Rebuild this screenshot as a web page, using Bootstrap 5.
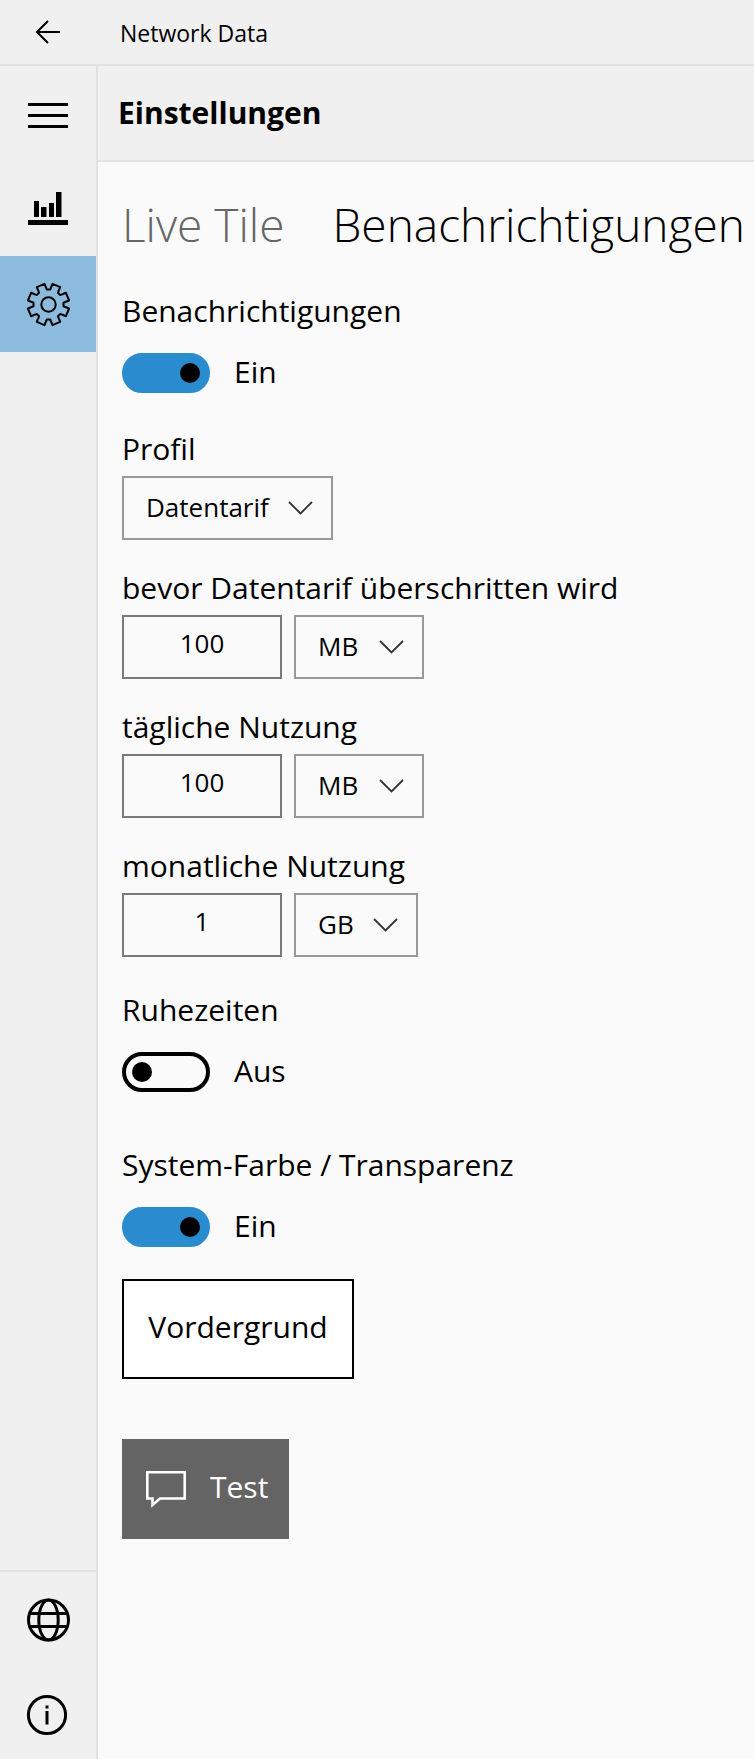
<!DOCTYPE html>
<html lang="de">
<head>
<meta charset="utf-8">
<meta name="viewport" content="width=device-width, initial-scale=1">
<title>Network Data</title>
<link href="https://cdn.jsdelivr.net/npm/bootstrap@5.3.0/dist/css/bootstrap.min.css" rel="stylesheet">
<style>
  :root { --line: #e2e2e2; --chrome: #f0f0f0; --accent: #2a8ccf; }
  body { background: #fafafa; color: #000; font-family: "Open Sans", "Noto Sans", sans-serif; font-size: 30px; line-height: 40px; }
  svg { display: block; flex-shrink: 0; fill: none; stroke: #000; stroke-width: 2; }
  .app-bar { height: 66px; background: var(--chrome); border-bottom: 2px solid var(--line); }
  .app-title { font-size: 23px; line-height: 32px; padding-left: 24px; padding-top: 2px; }
  .rail { width: 98px; background: var(--chrome); border-right: 2px solid var(--line); }
  .rail-btn { width: 96px; height: 96px; border: 0; border-radius: 0; padding: 0; display: flex; align-items: center; justify-content: center; }
  .rail-btn.menu { height: 94px; }
  .rail-btn.back { height: 64px; }
  .rail-btn.current { background: #8cbbdd; }
  .rail-foot { border-top: 2px solid var(--line); padding-top: 4px; gap: 7px; }
  .rail-foot .rail-btn { height: 88px; }
  .thick { stroke-width: 3; }
  .round { stroke-width: 3; }
  .page-head { height: 96px; background: var(--chrome); border-bottom: 2px solid var(--line); padding-left: 20px; }
  .page-head h1 { font-size: 30px; line-height: 40px; font-weight: 700; }
  .page-body { padding: 30px 0 0 24px; }
  .tabs { gap: 48px; margin-bottom: 34px; }
  .tabs a { color: #000; font-size: 46px; line-height: 64px; font-weight: 300; text-decoration: none; white-space: nowrap; }
  .tabs a.off { color: #666; }
  .field { margin-bottom: 27px; }
  .field > label { display: block; line-height: 42px; margin-bottom: 6px; }
  .pair { gap: 12px; }
  .field .form-select, .field .form-control { height: 64px; border: 2px solid #999; border-radius: 0; background-color: transparent; color: #000; font-size: 26px; line-height: 36px; }
  .field .form-control { width: 160px; border-color: #7a7a7a; text-align: center; padding: 8px 12px 16px; }
  .field .form-select { width: 130px; padding: 11px 0 13px 22px; background-position: right 18px center; background-size: 25px 14px;
    background-image: url("data:image/svg+xml,%3Csvg xmlns='http://www.w3.org/2000/svg' viewBox='0 0 25 14'%3E%3Cpath d='M1 1l11.5 11.5L24 1' fill='none' stroke='%23333' stroke-width='1.8'/%3E%3C/svg%3E"); }
  .field .form-select.profile { width: 211px; }
  .field .form-select.narrow { width: 124px; }
  .toggle { min-height: 40px; padding: 0; gap: 24px; }
  .toggle label { padding-bottom: 2px; line-height: 38px; }
  .toggle .form-check-input { width: 88px; height: 40px; margin: 0; float: none; border: 4px solid #000; border-radius: 20px; background-color: transparent; background-size: 20px 20px; background-origin: border-box; background-position: 10px center;
    background-image: url("data:image/svg+xml,%3Csvg xmlns='http://www.w3.org/2000/svg' viewBox='0 0 20 20'%3E%3Ccircle cx='10' cy='10' r='10'/%3E%3C/svg%3E"); }
  .toggle .form-check-input:checked { background-color: var(--accent); border-color: var(--accent); background-position: 58px center;
    background-image: url("data:image/svg+xml,%3Csvg xmlns='http://www.w3.org/2000/svg' viewBox='0 0 20 20'%3E%3Ccircle cx='10' cy='10' r='10'/%3E%3C/svg%3E"); }
  .sect { margin-bottom: 35px; }
  .sect > label { display: block; line-height: 42px; margin-bottom: 21px; }
  .sect.quiet { margin: 32px 0 52px; }
  .sect.system { margin-bottom: 32px; }
  .big-btn { height: 100px; border-radius: 0; font-size: 30px; line-height: 40px; }
  .big-btn.fore { width: 232px; padding: 0 0 4px; border: 2px solid #000; background: #fff; color: #000; margin-bottom: 60px; }
  .big-btn.test { width: 167px; padding: 0 0 0 24px; background: #646464; color: #fff; border: 0; gap: 24px; }
  .big-btn.test span { padding-bottom: 4px; }
  .big-btn.test svg { stroke: #fff; stroke-width: 2.6; }
</style>
</head>
<body>
<div class="d-flex flex-column min-vh-100">
  <header class="app-bar d-flex align-items-center">
    <button class="btn rail-btn back" type="button" aria-label="Zurück">
      <svg width="48" height="48" viewBox="0 0 48 48"><path d="M36 24H13M24 13L13 24l11 11"/></svg>
    </button>
    <span class="app-title">Network Data</span>
  </header>
  <div class="d-flex flex-grow-1">
    <nav class="rail d-flex flex-column flex-shrink-0" aria-label="Hauptmenü">
      <button class="btn rail-btn menu" type="button" aria-label="Menü">
        <svg width="48" height="48" viewBox="0 0 48 48"><path class="thick" d="M4 15.500H44M4 26.500H44M4 37.500H44"/></svg>
      </button>
      <button class="btn rail-btn" type="button" aria-label="Statistik">
        <svg width="48" height="48" viewBox="0 0 48 48"><path fill="#000" stroke="none" d="M4 36h40v5H4zM10 17h5v16h-5zM17 23h5.500v10h-5.500zM25 19h5v14h-5zM32 8h5.500v25H32z"/></svg>
      </button>
      <button class="btn rail-btn current" type="button" aria-label="Einstellungen">
        <svg width="48" height="48" viewBox="-24.500 -24.500 48 48" stroke-linejoin="round"><circle r="7.200"/><path d="M1.700-15L4-20.600 11.700-17.400 9.400-11.800 11.800-9.400 17.400-11.700 20.600-4 15-1.700V1.700L20.600 4 17.400 11.700 11.800 9.400 9.400 11.800 11.700 17.400 4 20.600 1.700 15H-1.700L-4 20.600-11.700 17.400-9.400 11.800-11.800 9.400-17.400 11.700-20.600 4-15 1.700V-1.700L-20.600-4-17.400-11.700-11.800-9.400-9.400-11.800-11.700-17.400-4-20.600-1.700-15z"/></svg>
      </button>
      <div class="rail-foot mt-auto d-flex flex-column">
        <button class="btn rail-btn" type="button" aria-label="Sprache">
          <svg width="48" height="48" viewBox="0 0 48 48"><g class="round"><circle cx="24.500" cy="24" r="20"/><ellipse cx="24.500" cy="24" rx="9.700" ry="20"/><path d="M6 17.500H43M6 30.500H43"/></g></svg>
        </button>
        <button class="btn rail-btn" type="button" aria-label="Info">
          <svg width="48" height="48" viewBox="0 0 48 48"><circle class="round" cx="23" cy="24" r="18.600"/><path class="thick" d="M23 20V33.500M23 14.500v3"/></svg>
        </button>
      </div>
    </nav>
    <main class="flex-grow-1">
      <div class="page-head d-flex align-items-center"><h1 class="m-0">Einstellungen</h1></div>
      <div class="page-body">
        <nav class="tabs d-flex" aria-label="Bereiche">
          <a class="off" href="#tile">Live Tile</a>
          <a href="#notify" aria-current="page">Benachrichtigungen</a>
        </nav>
        <form id="notify">
          <div class="sect">
            <label for="sw-notify">Benachrichtigungen</label>
            <div class="form-check form-switch toggle d-flex align-items-center">
              <input class="form-check-input" type="checkbox" role="switch" id="sw-notify" checked>
              <label for="sw-notify">Ein</label>
            </div>
          </div>
          <div class="field">
            <label for="profile">Profil</label>
            <select class="form-select profile" id="profile"><option>Datentarif</option></select>
          </div>
          <div class="field">
            <label for="before">bevor Datentarif überschritten wird</label>
            <div class="pair d-flex">
              <input class="form-control" id="before" type="text" value="100">
              <select class="form-select" aria-label="Einheit Datentarif"><option>MB</option><option>GB</option></select>
            </div>
          </div>
          <div class="field">
            <label for="daily">tägliche Nutzung</label>
            <div class="pair d-flex">
              <input class="form-control" id="daily" type="text" value="100">
              <select class="form-select" aria-label="Einheit täglich"><option>MB</option><option>GB</option></select>
            </div>
          </div>
          <div class="field">
            <label for="monthly">monatliche Nutzung</label>
            <div class="pair d-flex">
              <input class="form-control" id="monthly" type="text" value="1">
              <select class="form-select narrow" aria-label="Einheit monatlich"><option>MB</option><option selected>GB</option></select>
            </div>
          </div>
          <div class="sect quiet">
            <label for="sw-quiet">Ruhezeiten</label>
            <div class="form-check form-switch toggle d-flex align-items-center">
              <input class="form-check-input" type="checkbox" role="switch" id="sw-quiet">
              <label for="sw-quiet">Aus</label>
            </div>
          </div>
          <div class="sect system">
            <label for="sw-system">System-Farbe / Transparenz</label>
            <div class="form-check form-switch toggle d-flex align-items-center">
              <input class="form-check-input" type="checkbox" role="switch" id="sw-system" checked>
              <label for="sw-system">Ein</label>
            </div>
          </div>
          <button class="btn big-btn fore d-block" type="button">Vordergrund</button>
          <button class="btn big-btn test d-flex align-items-center" type="button">
            <svg width="40" height="40" viewBox="0 0 40 40"><path d="M1.300 3.300H38.700V29.500H14L6.500 36V29.500H1.300z"/></svg>
            <span>Test</span>
          </button>
        </form>
      </div>
    </main>
  </div>
</div>
<script src="https://cdn.jsdelivr.net/npm/bootstrap@5.3.0/dist/js/bootstrap.bundle.min.js"></script>
</body>
</html>
